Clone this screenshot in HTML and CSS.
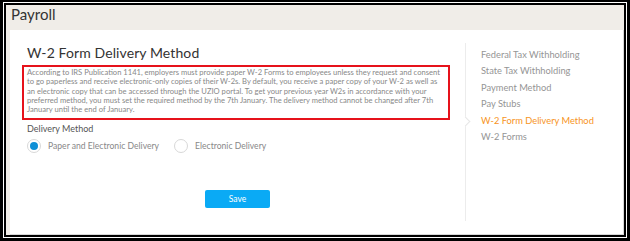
FILE: index.html
```html
<!DOCTYPE html>
<html lang="en">
<head>
    <meta charset="UTF-8">
    <title>Payroll - W-2 Form Delivery Method</title>
    <link rel="stylesheet" href="styles.css">
</head>
<body>
    <div class="frame">
        <div class="screen">
            <div class="header">Payroll</div>
            <div class="card">
                <div class="main">
                    <h1>W-2 Form Delivery Method</h1>
                    <p class="notice">According to IRS Publication 1141, employers must provide paper W-2 Forms to employees unless they request and consent to go paperless and receive electronic-only copies of their W-2s. By default, you receive a paper copy of your W-2 as well as an electronic copy that can be accessed through the UZIO portal. To get your previous year W2s in accordance with your preferred method, you must set the required method by the 7th January. The delivery method cannot be changed after 7th January until the end of January.</p>
                    <div class="label">Delivery Method</div>
                    <div class="options">
                        <label class="option"><span class="radio checked"></span>Paper and Electronic Delivery</label>
                        <label class="option"><span class="radio"></span>Electronic Delivery</label>
                    </div>
                    <div class="actions">
                        <button class="save">Save</button>
                    </div>
                </div>
                <div class="sidenav">
                    <a href="#">Federal Tax Withholding</a>
                    <a href="#">State Tax Withholding</a>
                    <a href="#">Payment Method</a>
                    <a href="#">Pay Stubs</a>
                    <a href="#" class="active">W-2 Form Delivery Method</a>
                    <a href="#">W-2 Forms</a>
                </div>
            </div>
        </div>
    </div>
</body>
</html>
```

FILE: styles.css
```css
body {
    margin: 0;
    font-family: Lato, "Open Sans", sans-serif;
    background-color: #fff;
}

.frame {
    box-sizing: border-box;
    width: 630px;
    height: 241px;
    border: 3px solid #000;
    border-top-width: 2px;
    padding: 1px;
    background-color: #fff;
}

.screen {
    box-sizing: border-box;
    height: 100%;
    border: 2px solid #000;
    background-color: #f0ede8;
    padding-left: 4px;
    display: flex;
    flex-direction: column;
}

.header {
    height: 25px;
    line-height: 18px;
    font-size: 15px;
    color: #333;
    margin-left: -4px;
    padding-left: 5px;
}

.card {
    flex: 1;
    display: flex;
    background-color: #fff;
    border-right: 1px solid #d6d6d6;
    border-bottom: 1px solid #d6d6d6;
    padding-left: 12px;
}

.main {
    width: 428px;
}

h1 {
    margin: 13px 0 0 5px;
    font-size: 14px;
    font-weight: normal;
    letter-spacing: 0.1px;
    line-height: 20px;
    color: #333;
}

.notice {
    margin: 2px 0 0;
    border: 2px solid #e6121b;
    padding: 1px 3px 4px;
    font-size: 7.6px;
    line-height: 9.3px;
    color: #888;
}

.label {
    margin: 3px 0 0 5px;
    font-size: 9px;
    line-height: 12px;
    color: #555;
}

.options {
    display: flex;
    gap: 15px;
    margin: 4px 0 0 5px;
}

.option {
    display: flex;
    align-items: center;
    gap: 7px;
    font-size: 8.6px;
    color: #888;
}

.radio {
    box-sizing: border-box;
    width: 14px;
    height: 14px;
    border: 1px solid #d8d8d8;
    border-radius: 50%;
    display: flex;
    align-items: center;
    justify-content: center;
}

.radio.checked::after {
    content: "";
    width: 8px;
    height: 8px;
    border-radius: 50%;
    background-color: #0e8fd6;
}

.actions {
    margin-top: 33px;
    padding-left: 183px;
}

.save {
    width: 65px;
    height: 18px;
    border: none;
    border-radius: 2px;
    background-color: #0aaaf5;
    color: #fff;
    font-family: inherit;
    font-size: 8.5px;
    cursor: pointer;
}

.sidenav {
    position: relative;
    margin: 13px 0 13px 15px;
    padding: 4px 0 0 15px;
    border-left: 1px solid #ececec;
    display: flex;
    flex-direction: column;
}

.sidenav a {
    font-size: 9.3px;
    line-height: 16.4px;
    color: #959595;
    text-decoration: none;
}

.sidenav a.active {
    color: #f7941d;
    position: relative;
}

.sidenav a.active::before {
    content: "";
    position: absolute;
    left: -19px;
    top: 5px;
    width: 6px;
    height: 6px;
    border-top: 1px solid #e6e6e6;
    border-right: 1px solid #e6e6e6;
    background-color: #fff;
    transform: rotate(45deg);
}
```
